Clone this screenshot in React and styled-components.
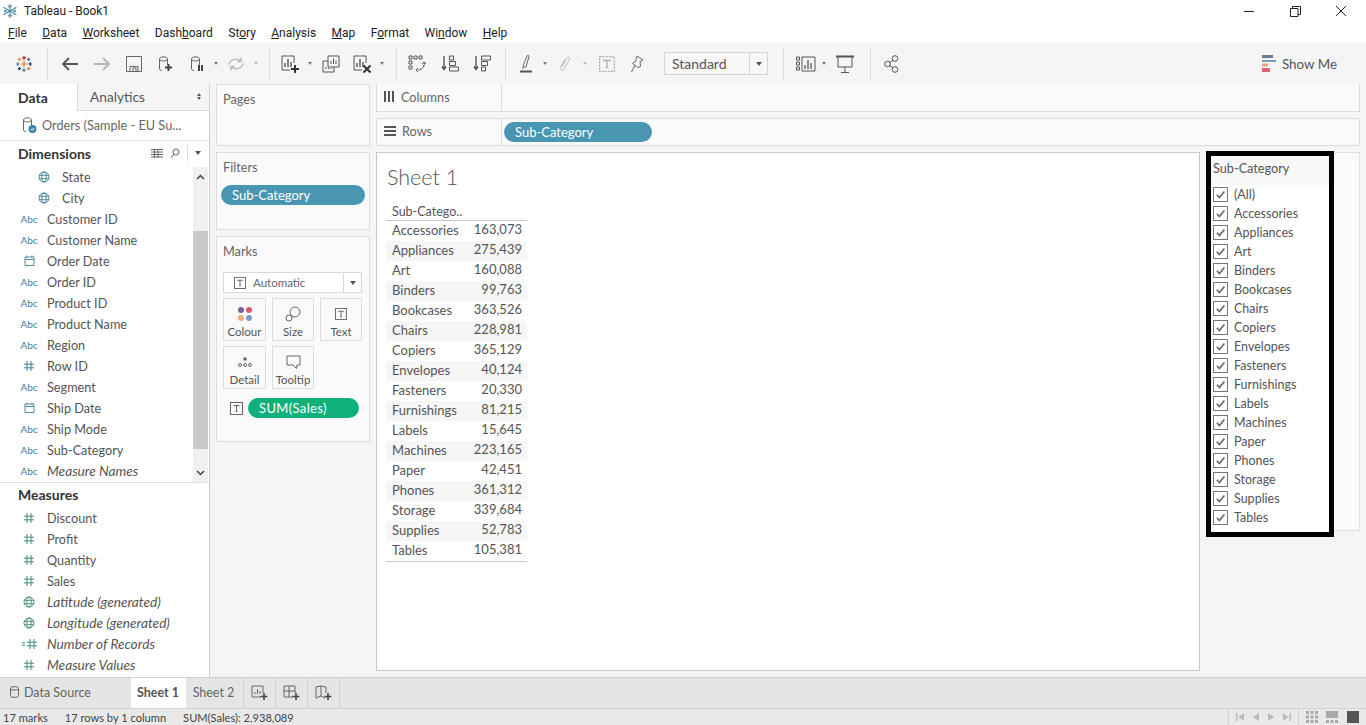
import styled, { createGlobalStyle } from "styled-components";

const GlobalStyle = createGlobalStyle`
  html, body { margin: 0; padding: 0; background: #f5f5f5; }
  * { box-sizing: border-box; }
  body { font-family: Lato, "Open Sans", Arial, sans-serif; color: #555; overflow: hidden; }
`;

const Page = styled.div`
  width: 1366px;
  height: 725px;
  display: flex;
  flex-direction: column;
  overflow: hidden;
`;

const TitleBar = styled.div`
  height: 22px;
  background: #fff;
  display: flex;
  align-items: center;
  padding-left: 2px;
  font-family: Roboto, sans-serif;
  font-size: 11.95px;
  color: #222;
  gap: 6px;
`;

const WinButtons = styled.div`
  margin-left: auto;
  display: flex;
  height: 100%;
  padding-right: 2px;
`;

const WinButton = styled.div`
  width: 46px;
  display: flex;
  align-items: center;
  justify-content: center;
`;

const MenuBar = styled.div`
  height: 21px;
  background: #fff;
  display: flex;
  align-items: center;
  padding: 1px 0 0 8px;
  gap: 15.4px;
  font-family: Roboto, sans-serif;
  font-size: 12px;
  color: #222;
`;

const MenuItem = styled.span`
  u { text-underline-offset: 1px; }
`;

const Toolbar = styled.div`
  height: 41px;
  background: #f5f5f5;
  display: flex;
  align-items: center;
`;

const Slot = styled.div`
  width: ${(p) => p.$w}px;
  flex: none;
  height: 100%;
  display: flex;
  align-items: center;
  justify-content: center;
`;

const ToolSep = styled.div`
  width: 1px;
  flex: none;
  height: 32px;
  background: #dcdcdc;
`;

const Caret = styled.div`
  width: 0;
  height: 0;
  border-left: 2.5px solid transparent;
  border-right: 2.5px solid transparent;
  border-top: 3px solid ${(p) => p.$color || "#777"};
`;

const CaretUp = styled(Caret)`
  transform: rotate(180deg);
`;

const SelectBox = styled.div`
  width: 104px;
  height: 23px;
  flex: none;
  background: #f7f7f7;
  border: 1px solid #d4d4d4;
  display: flex;
  align-items: center;
  padding-left: 7px;
  font-size: 14px;
  color: #555;
`;

const SelectArrow = styled.div`
  margin-left: auto;
  width: 18px;
  height: 100%;
  border-left: 1px solid #d4d4d4;
  display: flex;
  align-items: center;
  justify-content: center;
`;

const DownArrow = styled.div`
  width: 0;
  height: 0;
  border-left: 3.5px solid transparent;
  border-right: 3.5px solid transparent;
  border-top: 4px solid #555;
`;

const ShowMe = styled.div`
  margin-left: auto;
  padding-right: 29px;
  display: flex;
  align-items: center;
  gap: 6px;
  font-size: 13.4px;
  color: #555;
`;

const Main = styled.div`
  height: 593px;
  display: flex;
  background: #f5f5f5;
`;

const LeftPanel = styled.div`
  width: 210px;
  flex: none;
  background: #fff;
  border-right: 1px solid #d0d0d0;
  display: flex;
  flex-direction: column;
`;

const PanelTabs = styled.div`
  height: 27px;
  display: flex;
  background: #f5f5f5;
`;

const DataTab = styled.div`
  width: 77px;
  background: #fff;
  padding-left: 18px;
  font-size: 14px;
  font-weight: 700;
  color: #333;
  display: flex;
  align-items: center;
`;

const AnalyticsTab = styled.div`
  flex: 1;
  border-left: 1px solid #d8d8d8;
  border-bottom: 1px solid #d8d8d8;
  padding: 0 8px 1px 12px;
  font-size: 13.7px;
  color: #555;
  display: flex;
  align-items: center;
  justify-content: space-between;
`;

const UpDown = styled.div`
  display: flex;
  flex-direction: column;
  gap: 1px;
`;

const SourceRow = styled.div`
  height: 30px;
  border-bottom: 1px solid #e2e2e2;
  display: flex;
  align-items: center;
  padding: 0 0 2px 20px;
  gap: 4px;
  font-size: 12.7px;
  color: #666;
`;

const SectionHead = styled.div`
  height: ${(p) => p.$h}px;
  display: flex;
  align-items: center;
  padding: 0 0 2px 18px;
  font-size: 14px;
  font-weight: 700;
  color: #333;
`;

const HeadTools = styled.div`
  margin-left: auto;
  display: flex;
  align-items: center;
  gap: 7px;
  padding-right: 8px;
`;

const HeadSep = styled.div`
  width: 1px;
  height: 16px;
  background: #ddd;
`;

const ListWrap = styled.div`
  display: flex;
  height: 316px;
  border-bottom: 1px solid #e0e0e0;
`;

const FieldList = styled.div`
  flex: 1;
`;

const Field = styled.div`
  height: 21px;
  display: flex;
  align-items: center;
  padding: 0 0 2px ${(p) => (p.$indent ? 62 : 47)}px;
  position: relative;
  font-size: ${(p) => (p.$italic ? 13.7 : 12.7)}px;
  color: #555;
  font-style: ${(p) => (p.$italic ? "italic" : "normal")};
  white-space: nowrap;
`;

const FieldIcon = styled.span`
  position: absolute;
  left: ${(p) => (p.$indent ? 33 : 18)}px;
  width: 22px;
  display: flex;
  justify-content: center;
  font-style: normal;
  font-size: 10px;
  color: #3f7f97;
`;

const Scrollbar = styled.div`
  width: 15px;
  margin-right: 1px;
  background: #f0f0f0;
  display: flex;
  flex-direction: column;
`;

const ScrollTrack = styled.div`
  height: ${(p) => p.$h}px;
  display: flex;
  justify-content: center;
  align-items: ${(p) => (p.$end ? "flex-end" : "flex-start")};
  padding: ${(p) => (p.$end ? "0 0 6px" : "7px 0 0")};
`;

const ScrollThumb = styled.div`
  height: 218px;
  background: #c8c8c8;
`;

const MiddleCol = styled.div`
  width: 154px;
  flex: none;
  margin-left: 6px;
  display: flex;
  flex-direction: column;
  gap: 6px;
`;

const Card = styled.div`
  height: ${(p) => p.$h}px;
  flex: none;
  background: #fafafa;
  border: 1px solid #dcdcdc;
  padding: 6px;
  position: relative;
`;

const CardTitle = styled.div`
  font-size: 12.7px;
  color: #666;
  line-height: 16px;
`;

const Pill = styled.div`
  background: ${(p) => p.$color};
  color: #fff;
  border-radius: 10px;
  height: 20px;
  width: ${(p) => p.$w}px;
  font-size: 13px;
  display: flex;
  align-items: center;
  padding: 0 0 1px 11px;
  flex: none;
`;

const FilterPill = styled(Pill)`
  margin: 10px 0 0 -2px;
`;

const MeasurePill = styled(Pill)`
  letter-spacing: 0.35px;
`;

const MarkType = styled.div`
  margin-top: 13px;
  width: 139px;
  height: 21px;
  background: #fff;
  border: 1px solid #d8d8d8;
  display: flex;
  align-items: center;
  padding-left: 10px;
  gap: 7px;
  font-size: 11.5px;
  color: #666;
`;

const MarkArrow = styled.div`
  margin-left: auto;
  width: 18px;
  height: 100%;
  border-left: 1px solid #d8d8d8;
  display: flex;
  align-items: center;
  justify-content: center;
`;

const MarkGrid = styled.div`
  display: grid;
  grid-template-columns: 43px 42px 42px;
  grid-auto-rows: 43px;
  column-gap: 6px;
  row-gap: 5px;
  margin-top: 5px;
`;

const MarkButton = styled.div`
  border: 1px solid #dcdcdc;
  background: #fafafa;
  display: flex;
  flex-direction: column;
  align-items: center;
  font-size: 11.5px;
  color: #555;
  padding-top: 5px;
`;

const MarkIcon = styled.div`
  height: 20px;
  display: flex;
  align-items: center;
  justify-content: center;
`;

const MarkLabel = styled.div`
  margin-top: 1px;
`;

const PillRow = styled.div`
  display: flex;
  align-items: center;
  gap: 5px;
  margin: 9px 0 0 7px;
`;

const Workspace = styled.div`
  width: 984px;
  flex: none;
  margin-left: 6px;
  display: flex;
  flex-direction: column;
  gap: 6px;
`;

const Shelf = styled.div`
  height: ${(p) => p.$h}px;
  background: #fafafa;
  border: 1px solid #dcdcdc;
  border-top: ${(p) => (p.$noTop ? "none" : "1px solid #dcdcdc")};
  display: flex;
  align-items: center;
  flex: none;
`;

const ShelfLabel = styled.div`
  width: 125px;
  height: 100%;
  border-right: 1px solid #dcdcdc;
  display: flex;
  align-items: center;
  gap: 6px;
  padding: 0 0 2px 7px;
  font-size: 12.7px;
  color: #666;
`;

const ShelfBody = styled.div`
  padding-left: 2px;
`;

const ViewRow = styled.div`
  display: flex;
  gap: 6px;
`;

const SheetView = styled.div`
  width: 824px;
  height: 519px;
  background: #fff;
  border: 1px solid #c8c8c8;
  padding: 9px 0 0 9px;
`;

const SheetTitle = styled.div`
  font-size: 21.5px;
  font-weight: 300;
  color: #555;
  line-height: 30px;
  padding-left: 1px;
`;

const Table = styled.div`
  width: 141px;
  margin-top: 10px;
  border-bottom: 1px solid #c8c8c8;
  font-size: 13px;
`;

const TableHead = styled.div`
  height: 19px;
  padding-left: 6px;
  border-bottom: 1px solid #c8c8c8;
  font-size: 12.5px;
  line-height: 20px;
  color: #555;
`;

const TableRow = styled.div`
  height: 20px;
  display: flex;
  justify-content: space-between;
  padding: 0 5px 0 6px;
  background: ${(p) => (p.$alt ? "#f6f6f6" : "#fff")};
  line-height: 19px;
  color: #555;
`;

const RowValue = styled.span`
  margin-top: -1px;
`;

const LegendCard = styled.div`
  width: 154px;
  height: 379px;
  background: #fafafa;
  border: 1px solid #e2e2e2;
  border-left: none;
`;

const LegendFrame = styled.div`
  width: 128px;
  height: 386px;
  margin-top: -2px;
  border: 5px solid #000;
  background: #fff;
`;

const LegendHead = styled.div`
  height: 29px;
  background: #f8f8f8;
  padding-left: 2px;
  font-size: 12.7px;
  line-height: 24px;
  color: #555;
`;

const LegendRow = styled.div`
  height: 19px;
  display: flex;
  align-items: center;
  gap: 6px;
  padding-left: 2px;
  font-size: 12.5px;
  color: #555;
`;

const CheckBox = styled.div`
  width: 15px;
  height: 15px;
  border: 1px solid #777;
  background: #fff;
  display: flex;
  align-items: center;
  justify-content: center;
  flex: none;
`;

const TabBar = styled.div`
  height: 31px;
  background: #e5e5e5;
  border-top: 1px solid #d0d0d0;
  display: flex;
  font-size: 12.5px;
`;

const SourceTab = styled.div`
  width: 131px;
  display: flex;
  align-items: center;
  padding: 0 0 2px 10px;
  gap: 5px;
  color: #666;
`;

const SheetTab = styled.div`
  width: ${(p) => p.$w}px;
  display: flex;
  align-items: center;
  justify-content: center;
  padding: 0 ${(p) => (p.$active ? 1 : 3)}px 2px 0;
  background: ${(p) => (p.$active ? "#fff" : "transparent")};
  font-weight: ${(p) => (p.$active ? 700 : 400)};
  color: ${(p) => (p.$active ? "#555" : "#666")};
  border-right: 1px solid ${(p) => (p.$active ? "#e5e5e5" : "#d2d2d2")};
`;

const NewTab = styled.div`
  width: 32px;
  display: flex;
  align-items: center;
  justify-content: center;
  border-right: 1px solid #d2d2d2;
`;

const StatusBar = styled.div`
  height: 17px;
  background: #e9e9e9;
  border-top: 1px solid #d4d4d4;
  display: flex;
  align-items: center;
  padding-left: 3px;
  font-size: 11.1px;
  color: #444;
`;

const StatusText = styled.span`
  margin-right: ${(p) => p.$mr}px;
`;

const StatusRight = styled.div`
  margin-left: auto;
  display: flex;
  height: 100%;
`;

const NavGroup = styled.div`
  width: ${(p) => p.$w}px;
  border-left: 1px solid #d0d0d0;
  display: flex;
  align-items: center;
  justify-content: space-around;
  padding: 0 3px;
`;

const G = "#555";

const Icon = ({ w = 18, h = 18, children }) => (
  <svg width={w} height={h} viewBox={`0 0 ${w} ${h}`} fill="none">
    {children}
  </svg>
);

const TableauLogo = ({ size = 18 }) => {
  const bar = (x, y, s, c) => (
    <g stroke={c} strokeWidth="1.2">
      <path d={`M${x - s} ${y}H${x + s}M${x} ${y - s}V${y + s}`} />
    </g>
  );
  return (
    <svg width={size} height={size} viewBox="0 0 18 18" fill="none">
      {bar(9, 9, 3.2, "#e8762d")}
      {bar(9, 2.8, 2, "#c72037")}
      {bar(9, 15.2, 2, "#5b879b")}
      {bar(2.8, 9, 2, "#59879b")}
      {bar(15.2, 9, 2, "#1f447e")}
      {bar(4.4, 4.4, 1.6, "#eb9129")}
      {bar(13.6, 4.4, 1.6, "#5c6692")}
      {bar(4.4, 13.6, 1.6, "#1f447e")}
      {bar(13.6, 13.6, 1.6, "#e8762d")}
    </svg>
  );
};

const WindowLogo = () => (
  <svg width="16" height="16" viewBox="0 0 15 15" fill="none" stroke="#4a8aa6" strokeWidth="1">
    <path d="M7.5 1v13M1.5 4l12 7M13.5 4l-12 7" />
    <path d="M5.5 2.500l2 1.500 2-1.500M5.500 12.500l2-1.500 2 1.500M2 6.500l2.200 1-2.200 1M13 6.500l-2.200 1 2.200 1" />
  </svg>
);

const DbIcon = ({ badge, color = "#666" }) => (
  <Icon w={18} h={18}>
    <path d="M3.500 4c0-1.400 2-2.200 4-2.200s4 .8 4 2.200v6M3.500 4v10c0 .8 1 1.400 2.500 1.500M3.500 4c0 1.300 2 2 4 2s4-.7 4-2" stroke={color} />
    {badge === "plus" && <path d="M12.500 9v7M9 12.500h7" stroke="#444" strokeWidth="2" />}
    {badge === "pause" && <path d="M11 10v6M14 10v6" stroke="#444" strokeWidth="2" />}
    {badge === "check" && (
      <>
        <circle cx="12.500" cy="13" r="4" fill="#3f86ad" />
        <path d="M10.800 13l1.300 1.300 2-2.300" stroke="#fff" />
      </>
    )}
  </Icon>
);

const ChartIcon = ({ badge }) => (
  <Icon w={20} h={20}>
    <path d="M14 2H2v14h8" stroke={G} />
    <path d="M14 2v7" stroke={G} />
    <path d="M5 13V9M8 13V5M11 13V8" stroke={G} strokeWidth="1.400" />
    {badge === "plus" && <path d="M15 11v8M11 15h8" stroke="#333" strokeWidth="2" />}
    {badge === "x" && <path d="M11.500 11.500l7 7M18.500 11.500l-7 7" stroke="#333" strokeWidth="2" />}
  </Icon>
);

const GlobeIcon = ({ color = "#3f7f97" }) => (
  <svg width="12" height="12" viewBox="0 0 12 12" fill="none" stroke={color} strokeWidth="0.9">
    <circle cx="6" cy="6" r="5" />
    <ellipse cx="6" cy="6" rx="2.200" ry="5" />
    <path d="M1 4.300h10M1 7.700h10" />
  </svg>
);

const HashIcon = ({ color = "#3e8a76" }) => (
  <svg width="10" height="10" viewBox="0 0 10 10" fill="none" stroke={color} strokeWidth="1">
    <path d="M3 0v10M7 0v10M0 3.200h10M0 6.800h10" />
  </svg>
);

const CalIcon = () => (
  <svg width="11" height="11" viewBox="0 0 11 11" fill="none" stroke="#3f7f97" strokeWidth="0.9">
    <path d="M1 2h9v8.500H1zM1 4.500h9M3 .5v2M8 .5v2" />
  </svg>
);

const TBox = ({ size = 13, dashed, color = "#666" }) => (
  <svg width={size} height={size} viewBox="0 0 13 13" fill="none" stroke={color} strokeWidth="1" strokeDasharray={dashed ? "1.500 1" : undefined}>
    <rect x="0.500" y="0.500" width="12" height="12" />
    <path d="M4 4.500V3.500h5v1M6.500 3.500v6M5.500 9.500h2" strokeDasharray="none" />
  </svg>
);

const Check = () => (
  <svg width="11" height="11" viewBox="0 0 11 11" fill="none" stroke="#666" strokeWidth="1.600">
    <path d="M1.800 5.800l2.600 2.700 5-6" />
  </svg>
);

const Chevron = ({ dir }) => (
  <svg width="9" height="6" viewBox="0 0 9 6" fill="none" stroke="#444" strokeWidth="1.500">
    <path d={dir === "up" ? "M1 5l3.500-3.500L8 5" : "M1 1l3.500 3.500L8 1"} />
  </svg>
);

const ViewDots = ({ n, fill }) => (
  <svg width="12" height="12" viewBox="0 0 12 12" fill={fill}>
    {n === 3 &&
      [0, 4.500, 9].flatMap((y) =>
        [0, 4.500, 9].map((x) => <rect key={`${x}-${y}`} x={x} y={y} width="3" height="3" />)
      )}
    {n === 2 && (
      <>
        <rect x="0" y="0" width="12" height="7" />
        {[0, 4.500, 9].map((x) => (
          <rect key={x} x={x} y="9" width="3" height="3" />
        ))}
      </>
    )}
    {n === 1 && <rect x="0" y="0" width="12" height="12" />}
  </svg>
);

const menus = [
  ["", "F", "ile"],
  ["", "D", "ata"],
  ["", "W", "orksheet"],
  ["Dash", "b", "oard"],
  ["St", "o", "ry"],
  ["", "A", "nalysis"],
  ["", "M", "ap"],
  ["F", "o", "rmat"],
  ["Wi", "n", "dow"],
  ["", "H", "elp"],
];

const dimensions = [
  { name: "State", kind: "globe", indent: true },
  { name: "City", kind: "globe", indent: true },
  { name: "Customer ID", kind: "abc" },
  { name: "Customer Name", kind: "abc" },
  { name: "Order Date", kind: "cal" },
  { name: "Order ID", kind: "abc" },
  { name: "Product ID", kind: "abc" },
  { name: "Product Name", kind: "abc" },
  { name: "Region", kind: "abc" },
  { name: "Row ID", kind: "hashblue" },
  { name: "Segment", kind: "abc" },
  { name: "Ship Date", kind: "cal" },
  { name: "Ship Mode", kind: "abc" },
  { name: "Sub-Category", kind: "abc" },
  { name: "Measure Names", kind: "abc", italic: true },
];

const measures = [
  { name: "Discount", kind: "hash" },
  { name: "Profit", kind: "hash" },
  { name: "Quantity", kind: "hash" },
  { name: "Sales", kind: "hash" },
  { name: "Latitude (generated)", kind: "globegreen", italic: true },
  { name: "Longitude (generated)", kind: "globegreen", italic: true },
  { name: "Number of Records", kind: "calc", italic: true },
  { name: "Measure Values", kind: "hash", italic: true },
];

const rows = [
  ["Accessories", "163,073"],
  ["Appliances", "275,439"],
  ["Art", "160,088"],
  ["Binders", "99,763"],
  ["Bookcases", "363,526"],
  ["Chairs", "228,981"],
  ["Copiers", "365,129"],
  ["Envelopes", "40,124"],
  ["Fasteners", "20,330"],
  ["Furnishings", "81,215"],
  ["Labels", "15,645"],
  ["Machines", "223,165"],
  ["Paper", "42,451"],
  ["Phones", "361,312"],
  ["Storage", "339,684"],
  ["Supplies", "52,783"],
  ["Tables", "105,381"],
];

const fieldGlyph = (kind) => {
  if (kind === "abc") return "Abc";
  if (kind === "globe") return <GlobeIcon />;
  if (kind === "globegreen") return <GlobeIcon color="#3e8a76" />;
  if (kind === "cal") return <CalIcon />;
  if (kind === "hashblue") return <HashIcon color="#3f7f97" />;
  if (kind === "calc")
    return (
      <svg width="15" height="10" viewBox="0 0 15 10" fill="none" stroke="#3e8a76" strokeWidth="1">
        <path d="M0 3.800h3M0 6.200h3M8 0v10M12 0v10M5 3.200h10M5 6.800h10" />
      </svg>
    );
  return <HashIcon />;
};

const FieldRows = ({ items }) =>
  items.map((f) => (
    <Field key={f.name} $indent={f.indent} $italic={f.italic}>
      <FieldIcon $indent={f.indent}>{fieldGlyph(f.kind)}</FieldIcon>
      {f.name}
    </Field>
  ));

export default function App() {
  return (
    <Page>
      <GlobalStyle />
      <TitleBar>
        <WindowLogo />
        Tableau - Book1
        <WinButtons>
          <WinButton>
            <svg width="11" height="11" viewBox="0 0 11 11" stroke="#222"><path d="M0 5.500h10" /></svg>
          </WinButton>
          <WinButton>
            <svg width="11" height="11" viewBox="0 0 11 11" fill="none" stroke="#222"><path d="M.5 2.500h7.500v8H.5zM2.500 2.500v-2h8v8H8" /></svg>
          </WinButton>
          <WinButton>
            <svg width="12" height="12" viewBox="0 0 12 12" stroke="#222"><path d="M1 1l10 10M11 1L1 11" /></svg>
          </WinButton>
        </WinButtons>
      </TitleBar>

      <MenuBar>
        {menus.map(([a, u, b]) => (
          <MenuItem key={a + u + b}>
            {a}
            <u>{u}</u>
            {b}
          </MenuItem>
        ))}
      </MenuBar>

      <Toolbar>
        <Slot $w={47}><TableauLogo /></Slot>
        <ToolSep />
        <Slot $w={6} />
        <Slot $w={32}>
          <Icon w={18} h={14}><path d="M17 7H2M8 1L2 7l6 6" stroke="#555" strokeWidth="1.800" /></Icon>
        </Slot>
        <Slot $w={32}>
          <Icon w={18} h={14}><path d="M1 7h15M10 1l6 6-6 6" stroke="#b5b5b5" strokeWidth="1.800" /></Icon>
        </Slot>
        <Slot $w={31}>
          <Icon w={16} h={16}><path d="M.5.500h15v15H.5zM4 15.500V10.500h8v5M7 12h3v3.500H7z" stroke="#666" /></Icon>
        </Slot>
        <Slot $w={32}><DbIcon badge="plus" /></Slot>
        <Slot $w={32}><DbIcon badge="pause" /></Slot>
        <Slot $w={6}><Caret /></Slot>
        <Slot $w={34}>
          <Icon w={18} h={16}><path d="M2 9a7 6 0 0 1 12-4M16 7a7 6 0 0 1-12 4M14 1.500V5.500h-4M4 14.500V10.500h4" stroke="#bbb" strokeWidth="1.400" /></Icon>
        </Slot>
        <Slot $w={6}><Caret $color="#bbb" /></Slot>
        <Slot $w={10} />
        <ToolSep />
        <Slot $w={4} />
        <Slot $w={32}><ChartIcon badge="plus" /></Slot>
        <Slot $w={8}><Caret /></Slot>
        <Slot $w={33}>
          <Icon w={18} h={18}>
            <path d="M6 1h11v11H6zM1 6h5M1 6v11h11v-5" stroke={G} />
            <path d="M9 9V6M11.500 9V3.500M14 9V5.500M4 14v-2M6.500 14v-1M9 14v-1" stroke={G} />
          </Icon>
        </Slot>
        <Slot $w={30}><ChartIcon badge="x" /></Slot>
        <Slot $w={10}><Caret /></Slot>
        <Slot $w={9} />
        <ToolSep />
        <Slot $w={40}>
          <Icon w={18} h={18}>
            <path d="M1 1h3v3H1zM6 1h3v3H6zM11 1h3v3h-3zM1 6h3v3H1zM1 11h3v3H1z" stroke={G} />
            <path d="M16 7c1 4-1 7-6 8M10 13l-2 2 2 2M14 9l2-2 2 2" stroke={G} />
          </Icon>
        </Slot>
        <Slot $w={26}>
          <Icon w={18} h={17}>
            <path d="M3 1v13M1 11.500l2 3 2-3" stroke="#555" strokeWidth="1.400" />
            <path d="M8.500 1h4v4h-4zM8.500 6.500h6v4h-6zM8.500 12h9v4h-9z" stroke={G} />
          </Icon>
        </Slot>
        <Slot $w={38}>
          <Icon w={18} h={17}>
            <path d="M3 1v13M1 11.500l2 3 2-3" stroke="#555" strokeWidth="1.400" />
            <path d="M8.500 1h9v4h-9zM8.500 6.500h6v4h-6zM8.500 12h4v4h-4z" stroke={G} />
          </Icon>
        </Slot>
        <Slot $w={4} />
        <ToolSep />
        <Slot $w={5} />
        <Slot $w={30}>
          <Icon w={14} h={19}>
            <path d="M5 13l-1-1 4-10c.5-1 2.500-.5 2 .5L7 13zM4.500 12.500L3.500 15" stroke="#666" />
            <path d="M1 17.500h12" stroke="#555" strokeWidth="2" />
          </Icon>
        </Slot>
        <Slot $w={8}><Caret /></Slot>
        <Slot $w={32}>
          <Icon w={12} h={18}><path d="M3 12l5-9c1-2 3.500-.5 2.500 1.500L5 14c-1.500 2.500-4.500 1-3.500-1.500L6 4" stroke="#bbb" /></Icon>
        </Slot>
        <Slot $w={8}><Caret $color="#bbb" /></Slot>
        <Slot $w={36}><TBox size={16} dashed color="#aaa" /></Slot>
        <Slot $w={24}>
          <Icon w={14} h={18}><path d="M7 1l6 4-3 1.500.5 5-3 1-5-4 3-2zM5 10l-3.500 7" stroke="#666" /></Icon>
        </Slot>
        <Slot $w={15} />
        <SelectBox>
          Standard
          <SelectArrow><DownArrow /></SelectArrow>
        </SelectBox>
        <Slot $w={15} />
        <ToolSep />
        <Slot $w={7} />
        <Slot $w={30}>
          <Icon w={20} h={16}>
            <path d="M.5 1h3v3h-3zM.5 6h3v3h-3zM.5 11h3v3h-3zM6 1h13v14H6z" stroke={G} />
            <path d="M9 13V9M12 13V4M15 13V7" stroke={G} strokeWidth="1.300" />
          </Icon>
        </Slot>
        <Slot $w={5}><Caret /></Slot>
        <Slot $w={38}>
          <Icon w={18} h={18}><path d="M0 1.500h18" stroke="#555" strokeWidth="2" /><path d="M2 2v10h14V2M9 12v5M5 17.500h8" stroke={G} /></Icon>
        </Slot>
        <Slot $w={6} />
        <ToolSep />
        <Slot $w={42}>
          <Icon w={16} h={18}>
            <circle cx="11" cy="3.500" r="2.800" stroke={G} />
            <circle cx="3.500" cy="9" r="2.800" stroke={G} />
            <circle cx="11" cy="14.500" r="2.800" stroke={G} />
            <path d="M8.800 5.300L5.800 7.400M5.800 10.800l3 1.900" stroke={G} />
          </Icon>
        </Slot>
        <ShowMe>
          <svg width="14" height="17" viewBox="0 0 14 17">
            <rect x="0" y="0" width="11" height="3" fill="#6e7c9b" />
            <rect x="0" y="5" width="14" height="2" fill="#7c9bc0" />
            <rect x="0" y="8.500" width="6" height="3" fill="#e8a77f" />
            <rect x="0" y="13" width="8" height="4" fill="#e0607a" />
          </svg>
          Show Me
        </ShowMe>
      </Toolbar>

      <Main>
        <LeftPanel>
          <PanelTabs>
            <DataTab>Data</DataTab>
            <AnalyticsTab>
              <span>Analytics</span>
              <UpDown>
                <CaretUp $color="#555" />
                <Caret $color="#555" />
              </UpDown>
            </AnalyticsTab>
          </PanelTabs>
          <SourceRow>
            <DbIcon badge="check" />
            Orders (Sample - EU Su...
          </SourceRow>
          <SectionHead $h={26}>
            Dimensions
            <HeadTools>
              <svg width="12" height="9" viewBox="0 0 12 9" stroke="#666">
                <path d="M0 .5h12M0 3h12M0 5.500h12M0 8h12M3.500 0v9M7 0v9" />
              </svg>
              <svg width="10" height="10" viewBox="0 0 10 10" fill="none" stroke="#666">
                <circle cx="6" cy="4" r="3" />
                <path d="M3.800 6.200L1 9.500" />
              </svg>
              <HeadSep />
              <DownArrow />
            </HeadTools>
          </SectionHead>
          <ListWrap>
            <FieldList><FieldRows items={dimensions} /></FieldList>
            <Scrollbar>
              <ScrollTrack $h={64}><Chevron dir="up" /></ScrollTrack>
              <ScrollThumb />
              <ScrollTrack $h={33} $end><Chevron dir="down" /></ScrollTrack>
            </Scrollbar>
          </ListWrap>
          <SectionHead $h={25}>Measures</SectionHead>
          <FieldRows items={measures} />
        </LeftPanel>

        <MiddleCol>
          <Card $h={62}><CardTitle>Pages</CardTitle></Card>
          <Card $h={78}>
            <CardTitle>Filters</CardTitle>
            <FilterPill $color="#4996b2" $w={144}>Sub-Category</FilterPill>
          </Card>
          <Card $h={206}>
            <CardTitle>Marks</CardTitle>
            <MarkType>
              <TBox size={12} />
              Automatic
              <MarkArrow><DownArrow /></MarkArrow>
            </MarkType>
            <MarkGrid>
              <MarkButton>
                <MarkIcon>
                  <svg width="16" height="16" viewBox="0 0 16 16">
                    <circle cx="4" cy="4" r="3" fill="#7b5a9b" />
                    <circle cx="12" cy="4" r="3" fill="#e2566e" />
                    <circle cx="4" cy="12" r="3" fill="#ecaa7e" />
                    <circle cx="12" cy="12" r="3" fill="#7c9bc8" />
                  </svg>
                </MarkIcon>
                <MarkLabel>Colour</MarkLabel>
              </MarkButton>
              <MarkButton>
                <MarkIcon>
                  <svg width="16" height="16" viewBox="0 0 16 16" fill="none" stroke="#666">
                    <circle cx="10" cy="6" r="5" />
                    <circle cx="4" cy="12" r="3" fill="#fafafa" />
                  </svg>
                </MarkIcon>
                <MarkLabel>Size</MarkLabel>
              </MarkButton>
              <MarkButton>
                <MarkIcon><TBox size={12} /></MarkIcon>
                <MarkLabel>Text</MarkLabel>
              </MarkButton>
              <MarkButton>
                <MarkIcon>
                  <svg width="16" height="14" viewBox="0 0 16 14" fill="none" stroke="#666">
                    <circle cx="8" cy="4" r="1.800" fill="#666" stroke="none" />
                    <circle cx="3" cy="10" r="1.500" />
                    <circle cx="8" cy="10" r="1.500" />
                    <circle cx="13" cy="10" r="1.500" />
                  </svg>
                </MarkIcon>
                <MarkLabel>Detail</MarkLabel>
              </MarkButton>
              <MarkButton>
                <MarkIcon>
                  <svg width="15" height="14" viewBox="0 0 15 14" fill="none" stroke="#666">
                    <path d="M1 1h13v9h-3l-.5 3.500L7 10H1z" />
                  </svg>
                </MarkIcon>
                <MarkLabel>Tooltip</MarkLabel>
              </MarkButton>
            </MarkGrid>
            <PillRow>
              <TBox size={13} />
              <MeasurePill $color="#0fb07c" $w={111}>SUM(Sales)</MeasurePill>
            </PillRow>
          </Card>
        </MiddleCol>

        <Workspace>
          <Shelf $h={28} $noTop>
            <ShelfLabel>
              <svg width="11" height="11" viewBox="0 0 11 11" fill="#555">
                <rect x="0" y="0" width="2" height="11" />
                <rect x="4" y="0" width="2" height="11" />
                <rect x="8" y="0" width="2" height="11" />
              </svg>
              Columns
            </ShelfLabel>
          </Shelf>
          <Shelf $h={28}>
            <ShelfLabel>
              <svg width="12" height="10" viewBox="0 0 12 10" fill="#555">
                <rect x="0" y="0" width="12" height="2" />
                <rect x="0" y="4" width="12" height="2" />
                <rect x="0" y="8" width="12" height="2" />
              </svg>
              Rows
            </ShelfLabel>
            <ShelfBody><Pill $color="#4996b2" $w={148}>Sub-Category</Pill></ShelfBody>
          </Shelf>
          <ViewRow>
            <SheetView>
              <SheetTitle>Sheet 1</SheetTitle>
              <Table>
                <TableHead>Sub-Catego..</TableHead>
                {rows.map(([label, value], i) => (
                  <TableRow key={label} $alt={i % 2 === 1}>
                    <span>{label}</span>
                    <RowValue>{value}</RowValue>
                  </TableRow>
                ))}
              </Table>
            </SheetView>
            <LegendCard>
              <LegendFrame>
                <LegendHead>Sub-Category</LegendHead>
                {["(All)", ...rows.map((r) => r[0])].map((name) => (
                  <LegendRow key={name}>
                    <CheckBox><Check /></CheckBox>
                    {name}
                  </LegendRow>
                ))}
              </LegendFrame>
            </LegendCard>
          </ViewRow>
        </Workspace>
      </Main>

      <TabBar>
        <SourceTab>
          <svg width="9" height="12" viewBox="0 0 9 12" fill="none" stroke="#666">
            <path d="M.5 2.500c0-2.500 8-2.500 8 0v7c0 2.500-8 2.500-8 0zM.5 2.500c0 2 8 2 8 0" />
          </svg>
          Data Source
        </SourceTab>
        <SheetTab $active $w={56}>Sheet 1</SheetTab>
        <SheetTab $w={57}>Sheet 2</SheetTab>
        <NewTab>
          <svg width="17" height="16" viewBox="0 0 17 16" fill="none" stroke="#666">
            <path d="M10 12H1V1h11v7M4 9V7M6.500 9V4M9 9V6" />
            <path d="M13 8v7M9.500 11.500h7" stroke="#444" strokeWidth="1.600" />
          </svg>
        </NewTab>
        <NewTab>
          <svg width="17" height="16" viewBox="0 0 17 16" fill="none" stroke="#666">
            <path d="M10 12H1V1h11v7M1 6h11M6 1v11" />
            <path d="M13 8v7M9.500 11.500h7" stroke="#444" strokeWidth="1.600" />
          </svg>
        </NewTab>
        <NewTab>
          <svg width="17" height="16" viewBox="0 0 17 16" fill="none" stroke="#666">
            <path d="M10 13l-4-2-5 2V2l5-1 5 1v6M6 1v10" />
            <path d="M13 8v7M9.500 11.500h7" stroke="#444" strokeWidth="1.600" />
          </svg>
        </NewTab>
      </TabBar>

      <StatusBar>
        <StatusText $mr={17}>17 marks</StatusText>
        <StatusText $mr={17}>17 rows by 1 column</StatusText>
        <span>SUM(Sales): 2,938,089</span>
        <StatusRight>
          <NavGroup $w={70}>
            <svg width="8" height="8" viewBox="0 0 8 8" fill="#bbb"><path d="M0 0h1.500v8H0zM8 0v8L2.500 4z" /></svg>
            <svg width="6" height="8" viewBox="0 0 6 8" fill="#bbb"><path d="M6 0v8L0 4z" /></svg>
            <svg width="6" height="8" viewBox="0 0 6 8" fill="#bbb"><path d="M0 0v8l6-4z" /></svg>
            <svg width="8" height="8" viewBox="0 0 8 8" fill="#bbb"><path d="M0 0v8l5.500-4zM6.500 0H8v8H6.500z" /></svg>
          </NavGroup>
          <NavGroup $w={68}>
            <ViewDots n={3} fill="#aaa" />
            <ViewDots n={2} fill="#aaa" />
            <ViewDots n={1} fill="#555" />
          </NavGroup>
        </StatusRight>
      </StatusBar>
    </Page>
  );
}
